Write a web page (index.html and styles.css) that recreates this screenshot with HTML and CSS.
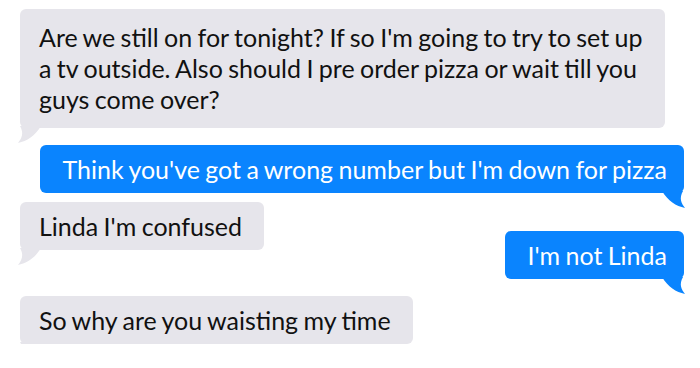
FILE: index.html
```html
<!DOCTYPE html>
<html lang="en">
<head>
    <meta charset="UTF-8">
    <meta name="viewport" content="width=device-width, initial-scale=1.0">
    <title>Messages</title>
    <link rel="stylesheet" href="styles.css">
</head>
<body>
    <div class="thread">
        <div class="bubble in long">
            Are we still on for tonight? If so I'm going to try to set up a tv outside. Also should I pre order pizza or wait till you guys come over?
            <svg class="tail" viewBox="0 0 24 18"><path d="M0 0 C6 10 14 15 23 17 C19 12 17 7 21 0 Z"/></svg>
        </div>
        <div class="bubble out gap-big">
            Think you've got a wrong number but I'm down for pizza
            <svg class="tail" viewBox="0 0 24 18"><path d="M0 0 C6 10 14 15 23 17 C19 12 17 7 21 0 Z"/></svg>
        </div>
        <div class="bubble in gap-small">
            Linda I'm confused
            <svg class="tail" viewBox="0 0 24 18"><path d="M0 0 C6 10 14 15 23 17 C19 12 17 7 21 0 Z"/></svg>
        </div>
        <div class="bubble out overlap">
            I'm not Linda
            <svg class="tail" viewBox="0 0 24 18"><path d="M0 0 C6 10 14 15 23 17 C19 12 17 7 21 0 Z"/></svg>
        </div>
        <div class="bubble in gap-big">
            So why are you waisting my time
            <svg class="tail" viewBox="0 0 24 18"><path d="M0 0 C6 10 14 15 23 17 C19 12 17 7 21 0 Z"/></svg>
        </div>
    </div>
</body>
</html>
```

FILE: styles.css
```css
body, html {
    margin: 0;
    padding: 0;
    background: #fff;
    font-family: Lato, "Liberation Sans", sans-serif;
}

.thread {
    display: flex;
    flex-direction: column;
    padding: 9px 16px 0 20px;
}

.bubble {
    position: relative;
    box-sizing: border-box;
    padding: 9px 19px 8px;
    border-radius: 6px;
    font-size: 25px;
    line-height: 31px;
    word-spacing: -1px;
}

.in {
    align-self: flex-start;
    max-width: 645px;
    padding-right: 22px;
    background-color: #e6e5eb;
    color: #111;
}

.bubble.long {
    padding: 13px 12px 13px 19px;
}

.out {
    align-self: flex-end;
    max-width: 668px;
    padding-left: 22px;
    padding-right: 17px;
    background-color: #0a84fe;
    color: #fff;
}

.gap-big {
    margin-top: 17px;
}

.gap-small {
    margin-top: 9px;
}

.overlap {
    margin-top: -19px;
}

.tail {
    position: absolute;
    bottom: -16px;
    width: 24px;
    height: 18px;
}

.out .tail {
    right: -2px;
    fill: #0a84fe;
}

.in .tail {
    left: -3px;
    fill: #e6e5eb;
    transform: scaleX(-1);
}
```
